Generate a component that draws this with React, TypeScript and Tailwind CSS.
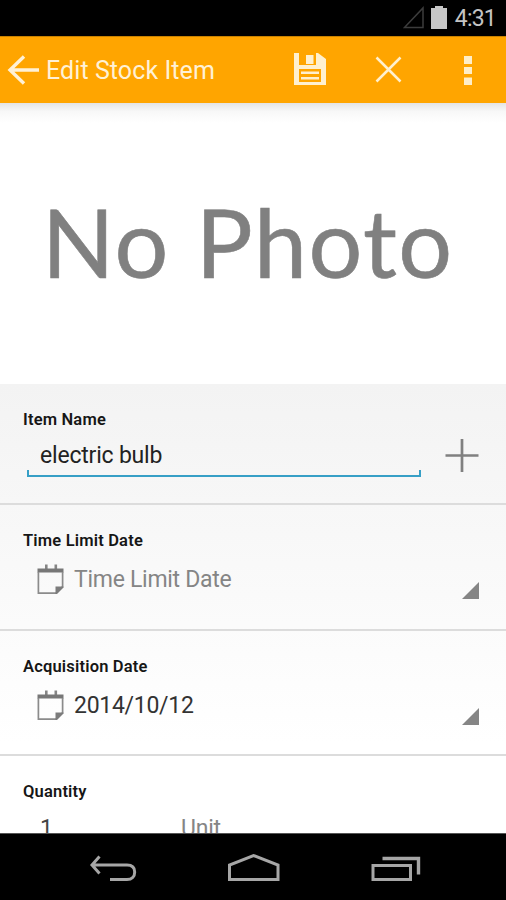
import type { ReactNode } from "react";

function StatusBar() {
  return (
    <div className="flex h-9 shrink-0 items-start justify-end bg-black pr-[10px]">
      <svg className="mt-[6px] mr-[6px]" width="22" height="23" viewBox="0 0 22 23" fill="none">
        <path d="M20 2V21.5H1.5Z" stroke="#3c3c3c" strokeWidth="1.5" />
      </svg>
      <svg className="mt-[6px] mr-[8px]" width="16" height="23" viewBox="0 0 16 23">
        <path d="M4 0H12V2H16V23H0V2H4Z" fill="#c6c6c6" />
      </svg>
      <span className="mt-[5px] text-[23px] leading-[28px] tracking-[-0.8px] text-[#c4c4c4]">4:31</span>
    </div>
  );
}

function ActionBar() {
  return (
    <header className="flex h-[67px] shrink-0 items-start border-t border-[#c98200] bg-[#ffa500]">
      <svg className="mt-[17px] ml-[7px]" width="33" height="32" viewBox="0 0 33 32" fill="none" stroke="#fff1d6" strokeWidth="3.4">
        <path d="M17 2.5L3 16L17 29.5M3 16H32" />
      </svg>
      <h1 className="mt-[18px] ml-[6px] w-[246px] text-[25px] leading-[32px] font-normal tracking-[0.08px] whitespace-nowrap text-[#fff1d6]">
        Edit Stock Item
      </h1>
      <svg className="mt-[16px]" width="34" height="33" viewBox="0 0 34 33">
        <path
          fillRule="evenodd"
          fill="#fff0cf"
          d="M2 0H7V12H24V0H26L34 6V32H2ZM7 16V29H29V16Z"
        />
        <path d="M14 2H21.5V11H14ZM9 18.5H27V21H9ZM9 24H27V26.5H9Z" fill="#fff0cf" />
      </svg>
      <svg className="mt-[19px] ml-[49px]" width="27" height="27" viewBox="0 0 27 27" stroke="#fff0cf" strokeWidth="2.5">
        <path d="M1.5 1.5L25.5 25.5M25.5 1.5L1.5 25.5" />
      </svg>
      <svg className="mt-[19px] ml-[61px]" width="9" height="30" viewBox="0 0 9 30" fill="#ffeec8">
        <path d="M1 0H9V8H1ZM1 11H9V18H1ZM1 21.5H9V29H1Z" />
      </svg>
    </header>
  );
}

function CalendarIcon() {
  return (
    <svg className="mt-[-1px] shrink-0" width="28" height="31" viewBox="0 0 28 31">
      <path d="M9.3 0.5V6M18.8 0.5V6" stroke="#858585" strokeWidth="2.6" />
      <path d="M0.5 4.5H26.5V8.5H0.5Z" fill="#777" />
      <path d="M1.4 8V29.1H19L25.6 22.5V8" fill="none" stroke="#8b8b8b" strokeWidth="1.7" />
      <path d="M18.5 30V22.5H26.5V23.5L20 30Z" fill="#7c7c7c" />
    </svg>
  );
}

function Label({ children }: { children: ReactNode }) {
  return (
    <div className="text-[16.5px] leading-[20px] font-semibold tracking-[0.18px] whitespace-nowrap text-[#161616]">
      {children}
    </div>
  );
}

function DateRow({ label, children }: { label: string; children: ReactNode }) {
  return (
    <section className="h-[125.5px] shrink-0 border-b-2 border-[#dcdcdc] pt-[26px] pl-[23px]">
      <Label>{label}</Label>
      <div className="mt-[14px] flex items-start pl-[14px]">
        <CalendarIcon />
        <div className="-mt-px ml-[9px] grow">{children}</div>
        <svg className="mt-[17px] mr-[27px]" width="17" height="17" viewBox="0 0 17 17">
          <path d="M17 0V17H0Z" fill="#858585" />
        </svg>
      </div>
    </section>
  );
}

function NavBar() {
  return (
    <nav className="flex h-[67px] shrink-0 items-start border-t border-[#555] bg-black">
      <svg className="mt-[21px] ml-[89px]" width="48" height="28" viewBox="0 0 48 28" fill="none" stroke="#a6a6a6" strokeWidth="3">
        <path d="M10.5 1.5L3 10L10.5 18.5M3 10H38C43 10 45.7 12.5 45.7 17S43 24.5 38 24.5H21" />
      </svg>
      <svg className="mt-[19px] ml-[90px]" width="54" height="30" viewBox="0 0 54 30" fill="none" stroke="#a6a6a6" strokeWidth="3">
        <path d="M2.5 26.5V12L26.5 2.5L51 12V26.5Z" />
      </svg>
      <svg className="mt-[22px] ml-[89px]" width="52" height="28" viewBox="0 0 52 28" fill="none" stroke="#a6a6a6" strokeWidth="3">
        <path d="M3 9.5H40.5V23.5H3Z" />
        <path d="M12.5 2.5H48.5V18.5" strokeWidth="3.4" />
      </svg>
    </nav>
  );
}

export default function App() {
  return (
    <div className="flex h-[900px] w-[506px] flex-col overflow-hidden bg-white font-['Roboto',sans-serif]">
      <StatusBar />
      <ActionBar />
      <div className="h-[281px] shrink-0 bg-linear-to-b from-[#e4e4e4] via-[#f8f8f8] via-[3%] to-white to-[7%] pt-[80px] pl-[42px] font-['Lato',sans-serif] text-[95px] leading-[116px] tracking-[1.5px] whitespace-nowrap text-[#808080] [-webkit-text-stroke:0.6px_#808080]">
        No Photo
      </div>
      <main className="flex min-h-0 grow flex-col overflow-hidden bg-linear-to-b from-[#f3f3f3] to-white to-[80%]">
        <section className="h-[121px] shrink-0 border-b-2 border-[#dcdcdc] pt-[26px] pl-[23px]">
          <Label>Item Name</Label>
          <div className="flex items-start">
            <div className="ml-[4px] w-[394px]">
              <div className="h-[40px] pt-[10px] pl-[13px] text-[23px] leading-[32px] tracking-[-0.2px] text-[#222]">
                electric bulb
              </div>
              <div className="h-[7px] border-x-2 border-b-2 border-[#369fc6]" />
            </div>
            <svg className="mt-[9px] ml-[24px]" width="34" height="34" viewBox="0 0 34 34" stroke="#808080" strokeWidth="2.7">
              <path d="M17 0V33M0.5 16.5H33.5" />
            </svg>
          </div>
        </section>
        <DateRow label="Time Limit Date">
          <span className="text-[23px] leading-[32px] tracking-[-0.28px] text-[#858585]">Time Limit Date</span>
        </DateRow>
        <DateRow label="Acquisition Date">
          <span className="text-[23px] leading-[32px] tracking-[-0.28px] text-[#333]">2014/10/12</span>
        </DateRow>
        <section className="pt-[26px] pl-[23px]">
          <Label>Quantity</Label>
          <div className="mt-[11px] flex pl-[17px] text-[23px] leading-[32px] tracking-[-0.2px]">
            <span className="w-[141px] text-[#444]">1</span>
            <span className="text-[#858585]">Unit</span>
          </div>
        </section>
      </main>
      <NavBar />
    </div>
  );
}
